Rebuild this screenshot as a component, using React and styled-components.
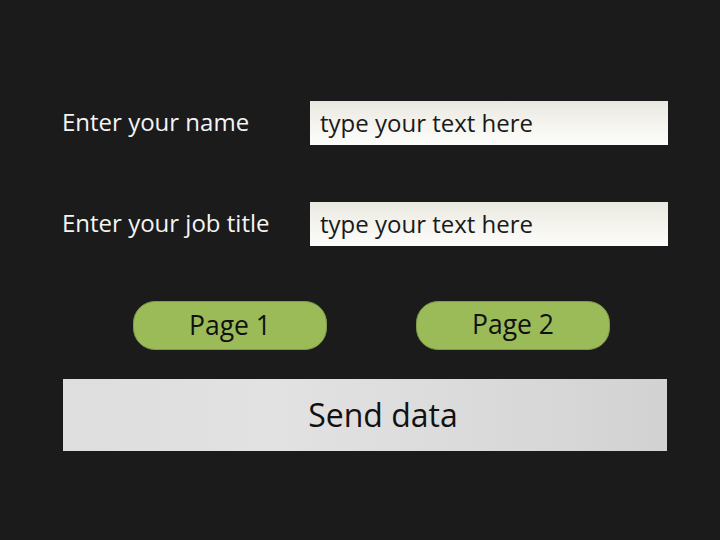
import React from "react";
import styled, { createGlobalStyle } from "styled-components";

const GlobalStyle = createGlobalStyle`
  html, body {
    margin: 0;
    padding: 0;
    background: #1b1b1b;
  }
  body {
    font-family: "Open Sans", "Noto Sans", sans-serif;
  }
`;

const Screen = styled.div`
  width: 720px;
  height: 540px;
  box-sizing: border-box;
  padding: 101px 0 0 62px;
  display: flex;
  flex-direction: column;
`;

const FieldRow = styled.div`
  display: grid;
  grid-template-columns: 248px 358px;
  align-items: center;
  height: 44px;
  margin-bottom: ${(p) => p.$gap}px;
`;

const Label = styled.label`
  color: #f4f4f4;
  font-size: 24px;
  line-height: 1;
  padding-bottom: 2px;
`;

const TextBox = styled.div`
  height: 44px;
  box-sizing: border-box;
  padding: 0 10px 1px;
  display: flex;
  align-items: center;
  background: linear-gradient(to bottom, #e9e8e0 0%, #f5f4ef 55%, #fdfdfb 100%);
  color: #1a1a1a;
  font-size: 24px;
`;

const PageButtons = styled.div`
  display: flex;
  gap: 89px;
  padding-left: 71px;
`;

const PageButton = styled.button`
  width: 194px;
  height: 49px;
  box-sizing: border-box;
  border-radius: 22px;
  border: 1px solid #7f9a48;
  background: #9bbb59;
  color: #111;
  font-family: inherit;
  font-size: 26.5px;
  padding: 0 0 ${(p) => (p.$raise ? "4px" : "1px")};
  cursor: pointer;
`;

const SendButton = styled.button`
  margin-top: 29px;
  margin-left: 1px;
  width: 604px;
  height: 72px;
  border: none;
  padding: 0 0 2px 36px;
  background: linear-gradient(to right, #dedede 0%, #e2e2e2 35%, #dadada 70%, #d2d2d2 100%);
  color: #111;
  font-family: inherit;
  font-size: 32px;
  cursor: pointer;
`;

const fields = [
  { label: "Enter your name", gap: 57 },
  { label: "Enter your job title", gap: 55 },
];

export default function App() {
  return (
    <>
      <GlobalStyle />
      <Screen>
        {fields.map((f) => (
          <FieldRow key={f.label} $gap={f.gap}>
            <Label>{f.label}</Label>
            <TextBox>type your text here</TextBox>
          </FieldRow>
        ))}
        <PageButtons>
          <PageButton>Page 1</PageButton>
          <PageButton $raise>Page 2</PageButton>
        </PageButtons>
        <SendButton>Send data</SendButton>
      </Screen>
    </>
  );
}
